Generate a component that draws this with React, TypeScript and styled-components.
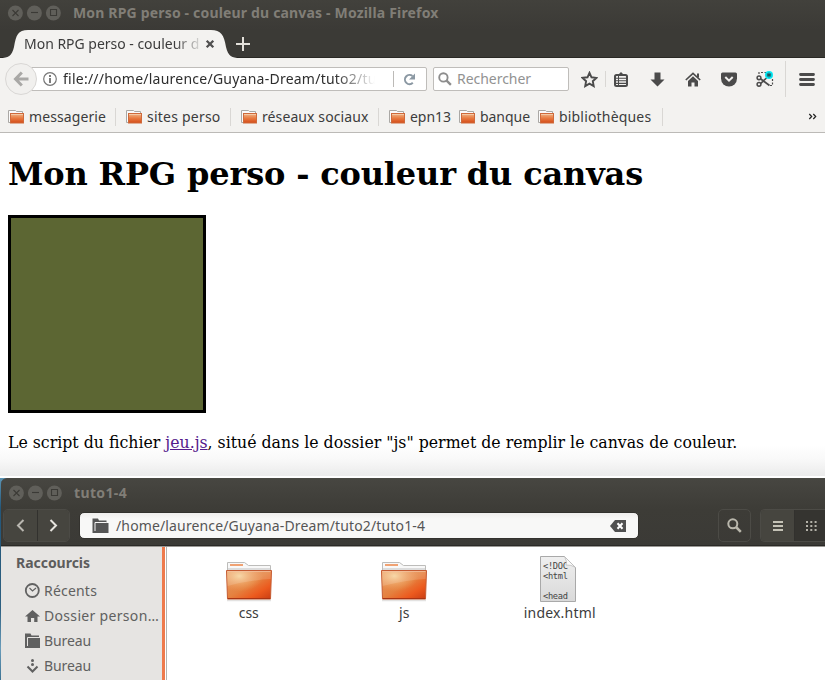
import React from 'react';
import styled, { createGlobalStyle, css } from 'styled-components';

const GlobalStyle = createGlobalStyle`
  * { box-sizing: border-box; }
  html, body { margin: 0; background: #fff; }
  body { width: 829px; height: 680px; overflow: hidden; font-family: "Noto Sans", "Open Sans", sans-serif; }
  svg { display: block; flex: none; }
`;

const Desktop = styled.div`
  width: 825px;
  height: 680px;
  display: flex;
  flex-direction: column;
  overflow: hidden;
`;

const Label = styled.span<{ $ls?: number; $color?: string; $bold?: boolean }>`
  font-size: 14px;
  line-height: 20px;
  white-space: pre;
  letter-spacing: ${p => p.$ls ?? 0}px;
  color: ${p => p.$color ?? '#3c3c3c'};
  font-weight: ${p => (p.$bold ? 700 : 400)};
`;

/* ---------- Window title ---------- */

const TitleRow = styled.div<{ $file?: boolean }>`
  display: flex;
  align-items: center;
  height: ${p => (p.$file ? 28 : 26)}px;
  padding-left: 7px;
`;
const WindowButtons = styled.div`
  display: flex;
  gap: 3px;
  margin-right: 12px;
`;

const WindowButton = ({ kind }: { kind: 'close' | 'min' | 'max' }) => (
  <svg width="16" height="16" viewBox="0 0 16 16">
    <circle cx="8.400" cy="8" r="7.500" fill="#605f5a" />
    <g fill="none" stroke="#3b3a36" strokeWidth="1.100">
      {kind === 'close' && <path d="M5.500 5l6 6M11.500 5l-6 6" />}
      {kind === 'min' && <path d="M5 7.500h7" />}
      {kind === 'max' && <path d="M5.500 4.500h6v6h-6z" />}
    </g>
  </svg>
);

const Controls = () => (
  <WindowButtons>
    <WindowButton kind="close" />
    <WindowButton kind="min" />
    <WindowButton kind="max" />
  </WindowButtons>
);

/* ---------- Browser ---------- */

const Browser = styled.section`
  height: 476px;
  flex: none;
  display: flex;
  flex-direction: column;
`;
const BrowserTop = styled.header`
  height: 58px;
  flex: none;
  background: linear-gradient(#42413c, #3b3a36 30px);
  border-bottom: 1px solid #292824;
`;
const TabRow = styled.div`
  display: flex;
  align-items: center;
  height: 32px;
`;
const Tab = styled.div`
  position: relative;
  width: 238px;
  height: 32px;
  padding: 4px 0 0 24px;
  display: flex;
  align-items: center;
`;
const TabShape = styled.svg`
  position: absolute;
  left: 0;
  top: 3px;
`;
const TabTitle = styled.div`
  position: relative;
  width: 177px;
  display: flex;
  mask-image: linear-gradient(90deg, #000 150px, transparent 180px);
`;
const TabClose = styled.svg`
  position: relative;
  margin-left: 4px;
`;
const NewTab = styled.svg`
  margin: 4px 0 0 -2px;
`;

const NavBar = styled.div`
  height: 43px;
  flex: none;
  display: flex;
  align-items: center;
  background: #f3f2f0;
  padding: 0 0 1px 5px;
`;
const BackButton = styled.div`
  position: relative;
  width: 32px;
  height: 32px;
  flex: none;
  border: 1px solid #d9d7d5;
  border-radius: 50%;
  background: #f1f0ee;
  display: flex;
  align-items: center;
  justify-content: center;
`;
const field = css`
  height: 24px;
  border: 1px solid #bfbdba;
  background: #fff;
  display: flex;
  align-items: center;
  flex: none;
`;
const UrlField = styled.div`
  ${field}
  width: 396px;
  margin-left: -6px;
  border-radius: 0 2px 2px 0;
  padding-left: 11px;
`;
const UrlText = styled.div`
  width: 317px;
  margin-left: 6px;
  display: flex;
  mask-image: linear-gradient(90deg, #000 272px, transparent 312px);
`;
const Reload = styled.div`
  margin-left: 13px;
  border-left: 1px solid #bcbab7;
  height: 16px;
  width: 32px;
  display: flex;
  align-items: center;
  justify-content: center;
`;
const SearchField = styled.div`
  ${field}
  width: 136px;
  margin-left: 6px;
  border-radius: 2px;
  padding-left: 4px;
  gap: 5px;
`;
const Tools = styled.div`
  display: flex;
  align-items: center;
  margin-left: 11px;
  height: 100%;
`;
const Tool = styled.div<{ $w: number }>`
  width: ${p => p.$w}px;
  display: flex;
  justify-content: center;
`;
const Rule = styled.div<{ $h: number }>`
  width: 1px;
  height: ${p => p.$h}px;
  background: #d9d7d4;
  flex: none;
`;

const Bookmarks = styled.div`
  height: 32px;
  flex: none;
  display: flex;
  align-items: center;
  background: #f3f2f0;
  border-bottom: 1px solid #bcbab7;
  padding-left: 8px;
`;
const Bookmark = styled.div<{ $w: number }>`
  display: flex;
  align-items: center;
  gap: 5px;
  width: ${p => p.$w}px;
  flex: none;
`;
const BookmarkRule = styled(Rule)`
  margin-right: 10px;
`;
const More = styled.svg`
  margin: 0 8px 0 auto;
`;

const Page = styled.main`
  flex: 1;
  padding: 22px 8px 0;
  font-family: "DejaVu Serif", serif;
  color: #000;
  background: linear-gradient(#fff, #fff 91%, #f9f9f9 95%, #ebebeb);
`;
const Heading = styled.h1`
  margin: 0;
  height: 60px;
  font-size: 32px;
  line-height: 38px;
  font-weight: 700;
  letter-spacing: -0.16px;
  white-space: nowrap;
`;
const GameCanvas = styled.div`
  width: 198px;
  height: 198px;
  border: 3px solid #000;
  background: #5c6633;
`;
const Paragraph = styled.p`
  margin: 20px 0 0;
  font-size: 15.750px;
  line-height: 19px;
  white-space: nowrap;
`;
const Link = styled.a`
  color: #551a8b;
  text-decoration: underline;
`;

/* ---------- File manager ---------- */

const FileWindow = styled.section`
  margin-top: 2px;
  flex: 1;
  display: flex;
  flex-direction: column;
  padding-left: 1px;
  background: linear-gradient(#5b93b3, #24577a 30px, #2d5f80 130px, #6a9cba 170px, #3c7293);
`;
const FileHeader = styled.header`
  height: 69px;
  flex: none;
  border-radius: 6px 0 0 0;
  background: linear-gradient(#474641, #3d3c37 30px, #3b3a36);
  border-top: 1px solid #494843;
  border-bottom: 1px solid #9b9995;
  box-shadow: inset 0 -1px #2b2a27;
`;
const FileTools = styled.div`
  display: flex;
  align-items: center;
  height: 37px;
  padding-left: 2px;
`;
const ButtonGroup = styled.div<{ $left: number; $open?: boolean }>`
  display: flex;
  height: 33px;
  flex: none;
  margin-left: ${p => p.$left}px;
  border: 1px solid #4c4b46;
  border-radius: ${p => (p.$open ? '5px 0 0 5px' : '5px')};
  border-right-width: ${p => (p.$open ? 0 : 1)}px;
  overflow: hidden;
`;
const HeaderButton = styled.div<{ $w: number; $tone?: 'raised' | 'pressed' }>`
  width: ${p => p.$w}px;
  display: flex;
  align-items: center;
  justify-content: center;
  background: ${p => (p.$tone === 'raised' ? '#46453f' : p.$tone === 'pressed' ? '#353430' : 'transparent')};
  & + & { border-left: 1px solid #32312e; }
`;
const PathField = styled.div`
  margin-left: 9px;
  width: 560px;
  height: 27px;
  flex: none;
  border: 1px solid #33322e;
  border-radius: 5px;
  background: linear-gradient(#efeeed, #f8f8f7 6px);
  display: flex;
  align-items: center;
  padding: 0 12px;
  gap: 7px;
`;
const ClearIcon = styled.svg`
  margin-left: auto;
`;
const FileBody = styled.div`
  flex: 1;
  display: flex;
  background: #fff;
`;
const Sidebar = styled.nav`
  width: 164px;
  background: #e6e4e2;
  border-right: 3px solid #ee7a4c;
  padding: 3px 0 0;
`;
const SidebarTitle = styled.div`
  height: 28px;
  padding: 3px 0 0 15px;
  display: flex;
`;
const SidebarItem = styled.div`
  height: 25px;
  padding-left: 23px;
  display: flex;
  align-items: center;
  gap: 4px;
`;
const Files = styled.div`
  flex: 1;
  margin-left: 1px;
  border-left: 1px solid #b5b3b0;
  display: flex;
  padding: 8px 0 0 4px;
`;
const FileItem = styled.div`
  width: 155.5px;
  display: flex;
  flex-direction: column;
  align-items: center;
`;
const FileArt = styled.div<{ $nudge?: number }>`
  height: 48px;
  display: flex;
  align-items: flex-end;
  padding: 0 ${p => p.$nudge ?? 0}px 1px 0;
`;

/* ---------- Drawings ---------- */

const SmallFolder = () => (
  <svg width="16" height="15" viewBox="0 0 16 15">
    <defs>
      <linearGradient id="sf" x1="0" y1="0" x2="0" y2="1">
        <stop offset="0" stopColor="#f0b78a" />
        <stop offset=".5" stopColor="#e87a40" />
        <stop offset="1" stopColor="#d44b18" />
      </linearGradient>
    </defs>
    <path d="M.5 13.5V1.5h7l1 1h6V5" fill="#fafafa" stroke="#aaa8a5" />
    <path d="M.5 13.5h2" stroke="#aaa8a5" />
    <rect x="2.5" y="4.5" width="13" height="9.5" fill="url(#sf)" stroke="#cf6a3b" />
    <path d="M3 5.500h12" stroke="#f4c9a5" />
  </svg>
);

const BigFolder = () => (
  <svg width="48" height="41" viewBox="0 0 48 41">
    <defs>
      <linearGradient id="bf" x1="0" y1="0" x2="1" y2="1">
        <stop offset="0" stopColor="#e99a62" />
        <stop offset=".5" stopColor="#e5813f" />
        <stop offset=".75" stopColor="#ec5a1e" />
        <stop offset="1" stopColor="#c83c12" />
      </linearGradient>
      <radialGradient id="bg" cx=".28" cy=".18" r=".55">
        <stop offset="0" stopColor="#f8d9a2" stopOpacity=".9" />
        <stop offset="1" stopColor="#f2a765" stopOpacity="0" />
      </radialGradient>
    </defs>
    <path d="M2 39.300h44" stroke="#c9c7c5" strokeWidth="2" opacity=".5" />
    <path d="M2.500 10V1.500h17l4 3h22V10" fill="#f8f8f8" stroke="#bdbcba" />
    <path d="M3 8h42" stroke="#dcdcdc" strokeWidth="2" />
    <path d="M5 4h13" stroke="#f0a273" strokeWidth="2" />
    <path d="M1.500 9.500h45l-1 28.500h-43z" fill="url(#bf)" stroke="#c55c33" />
    <path d="M2 10h44l-1 28H3z" fill="url(#bg)" />
    <path d="M2 10h44l-.3 8Q26 19 2.500 25z" fill="#fff" opacity=".14" />
    <path d="M2.500 10.500h43" stroke="#f5c3a2" opacity=".7" />
    <path d="M3 37.500h42" stroke="#a83414" />
  </svg>
);

const DocumentText = styled.text`
  font: 8.7px "DejaVu Sans Mono", monospace;
  letter-spacing: -0.3px;
  fill: #444;
`;
const HtmlDocument = () => (
  <svg width="38" height="46" viewBox="0 0 38 46">
    <defs>
      <linearGradient id="doc" x1="0" y1="0" x2="0" y2="1">
        <stop offset="0" stopColor="#efefef" />
        <stop offset="1" stopColor="#d9d9d9" />
      </linearGradient>
    </defs>
    <path d="M1.500.500h24l11 11v34h-35z" fill="url(#doc)" stroke="#a9a9a9" />
    <DocumentText x="4" y="13">&lt;!DOC</DocumentText>
    <DocumentText x="4" y="23">&lt;html</DocumentText>
    <DocumentText x="4" y="43">&lt;head</DocumentText>
    <path d="M25.500.500q3 5 1.500 8.500 5-.500 9.500 2.500z" fill="#fafafa" stroke="#bbb" strokeWidth=".8" />
  </svg>
);

const DarkFolder = ({ color = '#555', seam = '#f6f5f5' }: { color?: string; seam?: string }) => (
  <svg width="17" height="16" viewBox="0 0 17 16">
    <path d="M.500 15V.500h5.500l1 2h7.500v2H3.500V15z" fill={color} />
    <path d="M3 5h13.500v10H3z" fill={color} />
    <path d="M3 13V4.500h11.500" fill="none" stroke={seam} strokeWidth="1" />
  </svg>
);

const Magnifier = ({ color, size = 15 }: { color: string; size?: number }) => (
  <svg width={size} height={size} viewBox="0 0 15 15" fill="none" stroke={color}>
    <circle cx="5.800" cy="5.800" r="4.500" strokeWidth="2" />
    <path d="M9 9l4.800 4.800" strokeWidth="2.500" />
  </svg>
);

const ink = '#4b4b4b';

const bookmarks = [
  { name: 'messagerie', ls: 0.1, w: 107, rule: true },
  { name: 'sites perso', ls: 0.22, w: 104, rule: true },
  { name: 'réseaux sociaux', ls: 0.1, w: 137, rule: true },
  { name: 'epn13', ls: -0.03, w: 70 },
  { name: 'banque', ls: -0.05, w: 79 },
  { name: 'bibliothèques', ls: 0.18, w: 124 },
];

export default function App() {
  return (
    <Desktop>
      <GlobalStyle />
      <Browser>
        <BrowserTop>
          <TitleRow>
            <Controls />
            <Label $bold $ls={0.17} $color="#817e77">Mon RPG perso - couleur du canvas - Mozilla Firefox</Label>
          </TitleRow>
          <TabRow>
            <Tab>
              <TabShape width="240" height="29" viewBox="0 0 240 29">
                <path d="M0 29C8 29 12 27 14 18C16 6 18 1 28 1H211C221 1 224 6 226 18C228 27 232 29 240 29z" fill="#f3f2f0" />
              </TabShape>
              <TabTitle>
                <Label $ls={-0.02}>Mon RPG perso - couleur d</Label>
              </TabTitle>
              <TabClose width="10" height="10" viewBox="0 0 10 10">
                <path d="M1.700 1.700l6.600 6.600M8.300 1.700l-6.600 6.600" stroke="#505050" strokeWidth="2.300" />
              </TabClose>
            </Tab>
            <NewTab width="14" height="14" viewBox="0 0 14 14">
              <path d="M7 0v14M0 7h14" stroke="#e3e0da" strokeWidth="2" />
            </NewTab>
          </TabRow>
        </BrowserTop>

        <NavBar>
          <BackButton>
            <svg width="16" height="16" viewBox="0 0 16 16" fill="none" stroke="#a9a8a6" strokeWidth="3">
              <path d="M8.800 1.500L2.500 8l6.300 6.500M3 8h12.500" />
            </svg>
          </BackButton>
          <UrlField>
            <svg width="14" height="14" viewBox="0 0 14 14">
              <circle cx="7" cy="7" r="6.300" fill="none" stroke="#777" strokeWidth="1.200" />
              <path d="M7 3v2M7 6v5" stroke="#666" strokeWidth="1.700" />
            </svg>
            <UrlText>
              <Label $ls={0.24} $color="#2e2e2e">file:///home/laurence/Guyana-Dream/tuto2/tu</Label>
            </UrlText>
            <Reload>
              <svg width="13" height="13" viewBox="0 0 13 13">
                <path d="M9.800 9.800A4.600 4.600 0 1 1 9.500 3" fill="none" stroke="#8b98a3" strokeWidth="2" />
                <path d="M12 .500v6H6z" fill="#8b98a3" />
              </svg>
            </Reload>
          </UrlField>
          <SearchField>
            <Magnifier color="#8d8d8d" size={14} />
            <Label $ls={-0.04} $color="#929292">Rechercher</Label>
          </SearchField>
          <Tools>
            <Tool $w={18}>
              <svg width="17" height="17" viewBox="0 0 17 17">
                <path d="M8.500 1.800l2 4.500 4.900.600-3.600 3.300.900 4.900-4.200-2.400-4.300 2.400.900-4.900L1.500 6.900l5-.600z" fill="none" stroke={ink} strokeWidth="1.900" />
              </svg>
            </Tool>
            <Tool $w={14}><Rule $h={16} /></Tool>
            <Tool $w={18}>
              <svg width="14" height="15" viewBox="0 0 14 15">
                <path d="M4 3L7 0l3 3z" fill={ink} />
                <rect x="1" y="3" width="12" height="11" rx="1.500" fill="none" stroke={ink} strokeWidth="2" />
                <path d="M2 6.200h11M2 8.800h11M2 11.400h11" stroke={ink} strokeWidth="1.100" />
                <path d="M4.500 4v10" stroke={ink} strokeWidth="1" />
              </svg>
            </Tool>
            <Tool $w={54}>
              <svg width="15" height="15" viewBox="0 0 15 15">
                <path d="M4.500.500h6v7h4L7.500 14.500l-7-7h4z" fill={ink} />
              </svg>
            </Tool>
            <Tool $w={18}>
              <svg width="16" height="15" viewBox="0 0 16 15">
                <path d="M.800 8L8 1.300 15.200 8" fill="none" stroke={ink} strokeWidth="1.600" />
                <path d="M12 1.500h2v4h-2z" fill={ink} />
                <path d="M8 4.200l5 4.800v5.500H9.500v-4h-3v4H3V9z" fill={ink} />
              </svg>
            </Tool>
            <Tool $w={54}>
              <svg width="16" height="15" viewBox="0 0 16 15">
                <path d="M1.500.500h13q1.500 0 1.500 1.500v4.500a8 8 0 0 1-16 0V2Q0 .500 1.500.500z" fill={ink} />
                <path d="M4.300 5L8 8.600 11.700 5" fill="none" stroke="#f3f2f0" strokeWidth="2" />
              </svg>
            </Tool>
            <Tool $w={18}>
              <svg width="18" height="17" viewBox="0 0 18 17">
                <path d="M3 3V1.500h10M16.500 8v6.500H13" fill="none" stroke={ink} strokeWidth="1.200" strokeDasharray="2 1.500" />
                <circle cx="3" cy="6.800" r="1.900" fill="none" stroke={ink} strokeWidth="1.500" />
                <circle cx="3" cy="13.300" r="1.900" fill="none" stroke={ink} strokeWidth="1.500" />
                <path d="M4.800 8l8.700 6.500M4.800 12.300L10.500 7" stroke={ink} strokeWidth="1.700" />
                <circle cx="13" cy="4" r="4" fill="#06e9f5" />
                <path d="M13 1.500v5M10.800 2.800l4.400 2.400M15.200 2.800l-4.400 2.400" stroke="#20565c" strokeWidth="1.100" />
              </svg>
            </Tool>
            <Tool $w={23}><Rule $h={36} /></Tool>
            <Tool $w={20}>
              <svg width="16" height="13" viewBox="0 0 16 13">
                <path d="M1.500 1.500h13M1.500 6.500h13M1.500 11.500h13" stroke={ink} strokeWidth="2.800" strokeLinecap="round" />
              </svg>
            </Tool>
          </Tools>
        </NavBar>

        <Bookmarks>
          {bookmarks.map(b => (
            <React.Fragment key={b.name}>
              <Bookmark $w={b.w}>
                <SmallFolder />
                <Label $ls={b.ls}>{b.name}</Label>
              </Bookmark>
              {b.rule && <BookmarkRule $h={18} />}
            </React.Fragment>
          ))}
          <Rule $h={18} />
          <More width="9" height="7" viewBox="0 0 9 7">
            <path d="M1.300 1l2.400 2.500L1.300 6M5.300 1l2.400 2.500L5.300 6" fill="none" stroke="#222" strokeWidth="1.200" />
          </More>
        </Bookmarks>

        <Page>
          <Heading>Mon RPG perso - couleur du canvas</Heading>
          <GameCanvas />
          <Paragraph>
            Le script du fichier <Link>jeu.js</Link>, situé dans le dossier "js" permet de remplir le canvas de couleur.
          </Paragraph>
        </Page>
      </Browser>

      <FileWindow>
        <FileHeader>
          <TitleRow $file>
            <Controls />
            <Label $bold $ls={0.36} $color="#817e77">tuto1-4</Label>
          </TitleRow>
          <FileTools>
            <ButtonGroup $left={0}>
              <HeaderButton $w={33} $tone="raised">
                <svg width="9" height="13" viewBox="0 0 9 13">
                  <path d="M7.500 1L2 6.500 7.500 12" fill="none" stroke="#b9b7b0" strokeWidth="2" />
                </svg>
              </HeaderButton>
              <HeaderButton $w={32} $tone="raised">
                <svg width="9" height="13" viewBox="0 0 9 13">
                  <path d="M1.500 1L7 6.500 1.500 12" fill="none" stroke="#e6e4de" strokeWidth="2" />
                </svg>
              </HeaderButton>
            </ButtonGroup>
            <PathField>
              <DarkFolder />
              <Label $ls={0.14} $color="#555">/home/laurence/Guyana-Dream/tuto2/tuto1-4</Label>
              <ClearIcon width="16" height="12" viewBox="0 0 16 12">
                <path d="M0 6l5-6h11v12H5z" fill="#505050" />
                <path d="M7.500 3.300l5 5.400M12.500 3.300l-5 5.400" stroke="#fff" strokeWidth="2" />
              </ClearIcon>
            </PathField>
            <ButtonGroup $left={79}>
              <HeaderButton $w={31}><Magnifier color="#b9b7ac" size={15} /></HeaderButton>
            </ButtonGroup>
            <ButtonGroup $left={9} $open>
              <HeaderButton $w={33} $tone="raised">
                <svg width="10" height="10" viewBox="0 0 10 10">
                  <path d="M0 1h10M0 5h10M0 9h10" stroke="#c4c2b6" strokeWidth="2" />
                </svg>
              </HeaderButton>
              <HeaderButton $w={34} $tone="pressed">
                <svg width="11" height="10" viewBox="0 0 11 10">
                  <path d="M0 1h11M0 5h11M0 9h11" stroke="#b3b1a8" strokeWidth="2" strokeDasharray="2 2.300" />
                </svg>
              </HeaderButton>
            </ButtonGroup>
          </FileTools>
        </FileHeader>
        <FileBody>
          <Sidebar>
            <SidebarTitle><Label $bold $ls={-0.03} $color="#5d5d5d">Raccourcis</Label></SidebarTitle>
            <SidebarItem>
              <svg width="16" height="16" viewBox="0 0 16 16" fill="none" stroke="#626262">
                <circle cx="8.300" cy="7.500" r="6.500" strokeWidth="1.800" />
                <path d="M5.500 5l3 3L12 5" strokeWidth="1.200" />
              </svg>
              <Label $ls={0.2} $color="#606060">Récents</Label>
            </SidebarItem>
            <SidebarItem>
              <svg width="16" height="14" viewBox="0 0 16 14">
                <path d="M8.500 1l7.500 6.500h-2.500V13h-3.300V9H7v4H3.500V7.500H1z" fill="#606060" />
              </svg>
              <Label $ls={0.32} $color="#606060">Dossier person…</Label>
            </SidebarItem>
            <SidebarItem>
              <svg width="16" height="16" viewBox="0 0 16 16">
                <path d="M1 15V.500h5.500l1 2H15v2H4V15z" fill="#606060" />
                <path d="M3.500 5H16v10H3.500z" fill="#606060" />
                <path d="M3.500 13V4.500H15" fill="none" stroke="#e6e4e2" />
              </svg>
              <Label $ls={-0.11} $color="#606060">Bureau</Label>
            </SidebarItem>
            <SidebarItem>
              <svg width="16" height="16" viewBox="0 0 16 16">
                <circle cx="8.500" cy="2.500" r="1.500" fill="#606060" />
                <circle cx="8.500" cy="6.500" r="1.500" fill="#606060" />
                <path d="M3.500 8.500l5 5 5-5" fill="none" stroke="#606060" strokeWidth="2" />
              </svg>
              <Label $ls={-0.11} $color="#606060">Bureau</Label>
            </SidebarItem>
          </Sidebar>
          <Files>
            <FileItem>
              <FileArt><BigFolder /></FileArt>
              <Label>css</Label>
            </FileItem>
            <FileItem>
              <FileArt><BigFolder /></FileArt>
              <Label>js</Label>
            </FileItem>
            <FileItem>
              <FileArt $nudge={3}><HtmlDocument /></FileArt>
              <Label $ls={0.19}>index.html</Label>
            </FileItem>
          </Files>
        </FileBody>
      </FileWindow>
    </Desktop>
  );
}
